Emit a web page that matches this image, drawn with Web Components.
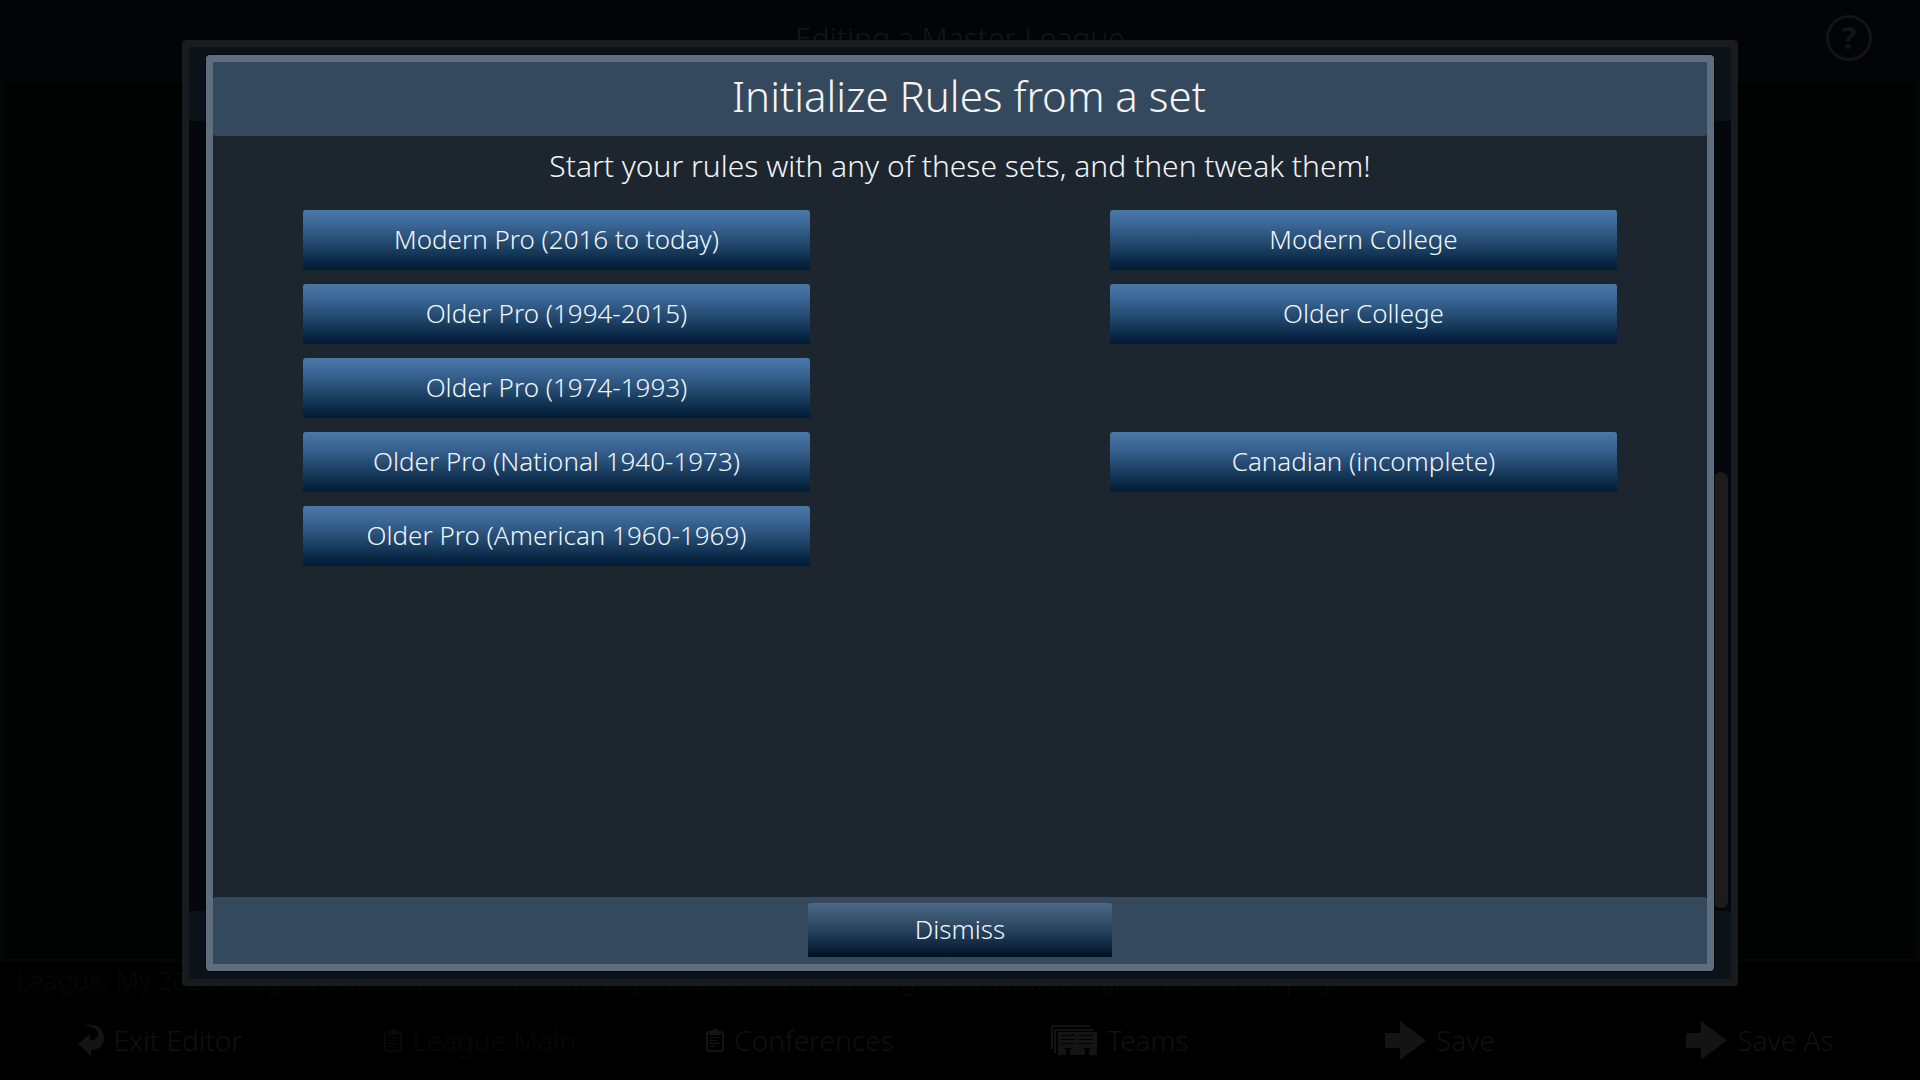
<!DOCTYPE html>
<html lang="en">
<head>
<meta charset="utf-8">
<title>Editing a Master League</title>
<style>
  body {
    margin: 0;
    background: #000;
    font-family: "Noto Sans", "Open Sans", sans-serif;
    font-weight: 300;
    overflow: hidden;
  }
</style>
</head>
<body>
<editor-screen>
  <span slot="title">Editing a Master League</span>
  <span slot="status">League: My 2021 League, &nbsp;Filename: screenshotimages2021, &nbsp;Standard League structure, eligible for career play</span>
  <nav-tab slot="tabs" icon="back">Exit Editor</nav-tab>
  <nav-tab slot="tabs" icon="clipboard" current>League Main</nav-tab>
  <nav-tab slot="tabs" icon="clipboard">Conferences</nav-tab>
  <nav-tab slot="tabs" icon="teams">Teams</nav-tab>
  <nav-tab slot="tabs" icon="arrow">Save</nav-tab>
  <nav-tab slot="tabs" icon="arrow">Save As</nav-tab>
</editor-screen>
<backdrop-panel></backdrop-panel>
<rules-dialog>
  <span slot="title">Initialize Rules from a set</span>
  <span slot="intro">Start your rules with any of these sets, and then tweak them!</span>
  <rule-button slot="pro">Modern Pro (2016 to today)</rule-button>
  <rule-button slot="pro">Older Pro (1994-2015)</rule-button>
  <rule-button slot="pro">Older Pro (1974-1993)</rule-button>
  <rule-button slot="pro">Older Pro (National 1940-1973)</rule-button>
  <rule-button slot="pro">Older Pro (American 1960-1969)</rule-button>
  <rule-button slot="other">Modern College</rule-button>
  <rule-button slot="other">Older College</rule-button>
  <rule-button slot="other" spaced>Canadian (incomplete)</rule-button>
  <rule-button slot="footer" kind="dismiss">Dismiss</rule-button>
</rules-dialog>

<script>
const ICONS = {
  back: `<svg width="26" height="32" viewBox="0 0 26 32">
    <path d="M6 1C17-1 26 4 26 14c0 8-5 12-13 12v6L0 20 12 10v6c5 0 8-2 8-6 0-5-5-8-14-9z"/>
  </svg>`,
  clipboard: `<svg width="18" height="24" viewBox="0 0 18 24">
    <path d="M2 3h3l2-1 2-2 2 2 2 1h3l2 2v17l-2 2H2l-2-2V5zm0 3v15l1 1h12l1-1V6l-1-1-1 2H4L3 5zM4 9h10v1H4zM4 12h7v1H4zM4 15h10v1H4zM4 18h5v1H4z" fill-rule="evenodd"/>
  </svg>`,
  teams: `<svg width="46" height="30" viewBox="0 0 46 30">
    <path d="M0 0h39v2H2v22H0zM3 4h39v2H5v22H3z"/>
    <path fill-rule="evenodd" d="M7 7h39v23h-8v-5l2-2h-8l2 2v5H19v-5l2-2h-8l2 2v5H7zM10 10h14v1H10zM28 10h14v1H28zM10 14h14v1H10zM28 14h14v1H28zM10 18h14v1H10zM28 18h14v1H28z"/>
  </svg>`,
  arrow: `<svg width="41" height="39" viewBox="0 0 41 39">
    <path d="M0 12h15V0l26 19.5L15 39V27H0z"/>
  </svg>`
};

class EditorScreen extends HTMLElement {
  constructor() {
    super();
    this.attachShadow({ mode: 'open' });
    this.shadowRoot.innerHTML = `
      <style>
        :host {
          display: flex;
          flex-direction: column;
          min-height: 100vh;
        }
        #frame {
          flex: 1;
          display: flex;
          flex-direction: column;
          border: 4px solid #040506;
        }
        header {
          display: grid;
          grid-template-columns: 1fr auto 1fr;
          align-items: center;
          height: 68px;
          padding-bottom: 8px;
          border-bottom: 2px solid #050608;
          background: #030406;
          color: #161616;
        }
        h1 {
          grid-column: 2;
          margin: 0;
          font-size: 30px;
          font-weight: inherit;
          line-height: 40px;
        }
        #help {
          justify-self: end;
          width: 46px;
          height: 46px;
          margin-right: 44px;
          padding: 0;
          border: 3px solid #141414;
          border-radius: 50%;
          background: none;
          color: #141414;
          font: 700 30px/40px "Noto Sans", sans-serif;
        }
        main {
          flex: 1;
          background: #010202;
        }
        #status {
          padding: 0 16px 2px;
          font-size: 26px;
          line-height: 36px;
          white-space: nowrap;
          color: #000c07;
        }
        nav {
          display: grid;
          grid-template-columns: repeat(6, 1fr);
          height: 80px;
        }
      </style>
      <div id="frame">
        <header>
          <h1><slot name="title"></slot></h1>
          <button id="help" aria-label="Help">?</button>
        </header>
        <main></main>
      </div>
      <div id="status"><slot name="status"></slot></div>
      <nav><slot name="tabs"></slot></nav>
    `;
  }
}

class NavTab extends HTMLElement {
  constructor() {
    super();
    this.attachShadow({ mode: 'open' });
    this.shadowRoot.innerHTML = `
      <style>
        :host {
          display: flex;
        }
        button {
          flex: 1;
          display: flex;
          align-items: center;
          justify-content: center;
          gap: 10px;
          padding: 0;
          border: 0;
          background: none;
          font: inherit;
          font-size: 28px;
          line-height: 40px;
          color: #111;
        }
        svg {
          fill: #141414;
        }
        :host([current]) button {
          color: #080808;
        }
        :host([current]) svg {
          fill: #090909;
        }
      </style>
      <button>${ICONS[this.getAttribute('icon')] || ''}<span><slot></slot></span></button>
    `;
  }
}

// Rules panel of the editor, dimmed behind the open dialog
class BackdropPanel extends HTMLElement {
  constructor() {
    super();
    this.attachShadow({ mode: 'open' });
    this.shadowRoot.innerHTML = `
      <style>
        :host {
          position: fixed;
          inset: 40px 182px 94px;
          box-sizing: border-box;
          display: flex;
          flex-direction: column;
          border: 7px solid #191c1f;
          border-radius: 4px;
          background: #04070b;
        }
        .band {
          height: 74px;
          background: #0d1218;
        }
        .band:last-child {
          height: 68px;
        }
        #body {
          flex: 1;
          display: flex;
          justify-content: flex-end;
          align-items: flex-end;
          padding: 0 3px 3px 0;
        }
        #thumb {
          width: 14px;
          height: 436px;
          border-radius: 7px;
          background: #1d1c1b;
        }
      </style>
      <div class="band"></div>
      <div id="body"><div id="thumb"></div></div>
      <div class="band"></div>
    `;
  }
}

class RulesDialog extends HTMLElement {
  constructor() {
    super();
    this.attachShadow({ mode: 'open' });
    this.shadowRoot.innerHTML = `
      <style>
        :host {
          position: fixed;
          inset: 54px 205px 108px;
          box-sizing: border-box;
          display: flex;
          flex-direction: column;
          border: 1px solid #06080b;
          border-radius: 5px;
          background: #1d262f;
        }
        #frame {
          flex: 1;
          display: flex;
          flex-direction: column;
          border: 7px solid #5f6e7f;
          border-radius: 4px;
        }
        header {
          padding: 4px 0 10px 18px;
          border-radius: 0 0 3px 3px;
          background: #35495e;
          text-align: center;
        }
        h2 {
          margin: 0;
          font-size: 42px;
          font-weight: inherit;
          line-height: 60px;
          color: #f6f4f2;
        }
        p {
          margin: 0;
          padding-bottom: 14px;
          font-size: 30px;
          line-height: 60px;
          text-align: center;
          color: #f2f4f6;
        }
        #sets {
          flex: 1;
          display: grid;
          grid-template-columns: 1fr 1fr;
          column-gap: 300px;
          padding: 0 90px;
        }
        .column {
          display: flex;
          flex-direction: column;
          gap: 14px;
        }
        footer {
          display: flex;
          justify-content: center;
          padding: 6px 0 7px;
          border-radius: 3px 3px 0 0;
          background: #35495e;
        }
      </style>
      <div id="frame" role="dialog" aria-labelledby="title">
        <header><h2 id="title"><slot name="title"></slot></h2></header>
        <p><slot name="intro"></slot></p>
        <div id="sets">
          <div class="column"><slot name="pro"></slot></div>
          <div class="column"><slot name="other"></slot></div>
        </div>
        <footer><slot name="footer"></slot></footer>
      </div>
    `;
  }
}

class RuleButton extends HTMLElement {
  constructor() {
    super();
    this.attachShadow({ mode: 'open' });
    this.shadowRoot.innerHTML = `
      <style>
        :host {
          display: block;
        }
        :host([spaced]) {
          margin-top: 74px;
        }
        button {
          display: block;
          width: 100%;
          height: 60px;
          padding: 0 0 2px;
          border: 0;
          border-radius: 3px 3px 0 0;
          background: linear-gradient(#4a79a7, #3a6594 25%, #1f4468 60%, #0a2947 85%, #001b34);
          font: inherit;
          font-size: 26px;
          line-height: 40px;
          color: #f0f5fa;
        }
        :host([kind="dismiss"]) button {
          width: 304px;
          height: 54px;
          background: linear-gradient(#4b6a88, #3a5670 25%, #1f3a56 60%, #0a2036 85%, #001020);
        }
      </style>
      <button><slot></slot></button>
    `;
  }
}

customElements.define('nav-tab', NavTab);
customElements.define('editor-screen', EditorScreen);
customElements.define('backdrop-panel', BackdropPanel);
customElements.define('rule-button', RuleButton);
customElements.define('rules-dialog', RulesDialog);
</script>
</body>
</html>
